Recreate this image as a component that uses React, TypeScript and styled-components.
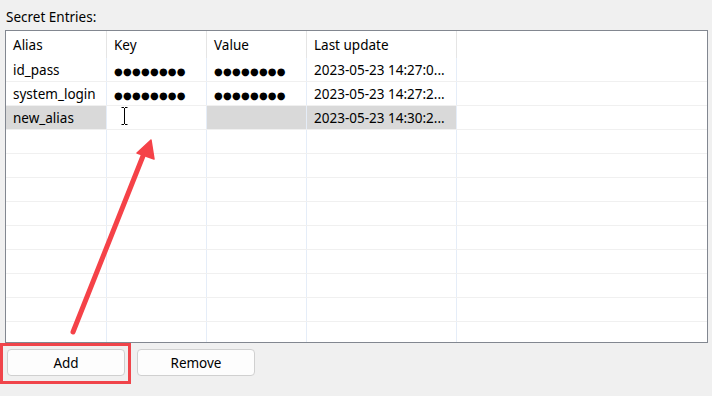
import React from 'react'
import styled, { createGlobalStyle } from 'styled-components'

const GlobalStyle = createGlobalStyle`
  html, body {
    margin: 0;
    padding: 0;
    background: #f0f0f0;
  }
  body {
    font-family: 'Noto Sans', 'Open Sans', sans-serif;
    font-size: 13.5px;
    color: #000;
  }
`

const COLS = [101, 100, 100, 150]

const Page = styled.div`
  position: relative;
  width: 712px;
  height: 396px;
  overflow: hidden;
`

const Label = styled.div`
  height: 30px;
  padding-left: 6px;
  line-height: 30px;
  box-sizing: border-box;
  padding-top: 2px;
`

const Frame = styled.div`
  margin-left: 5px;
  width: 703px;
  height: 313px;
  box-sizing: border-box;
  border: 1px solid #828790;
  background: #fff;
  overflow: hidden;
`

const HeaderRow = styled.div`
  display: flex;
  height: 27px;
`

const HeaderCell = styled.div<{ w: number }>`
  width: ${({ w }) => w}px;
  flex: none;
  box-sizing: border-box;
  padding-left: 7px;
  line-height: 28px;
  border-right: 1px solid #e5e5e5;
`

const Row = styled.div`
  display: flex;
  height: 24px;
  box-sizing: border-box;
  border-bottom: 1px solid #f0f0f0;
`

const Cell = styled.div<{ w: number; selected?: boolean }>`
  width: ${({ w }) => w}px;
  flex: none;
  box-sizing: border-box;
  padding-left: 7px;
  line-height: 24px;
  white-space: nowrap;
  overflow: hidden;
  border-right: 1px solid #e5edf8;
  background: ${({ selected }) => (selected ? '#d9d9d9' : '#fff')};
  position: relative;
`

const Dots = styled.span`
  font-family: 'DejaVu Sans', sans-serif;
  font-size: 10px;
  letter-spacing: 0.25px;
`

const Caret = styled.svg`
  position: absolute;
  left: 14px;
  top: 1px;
`

const Buttons = styled.div`
  display: flex;
  gap: 12px;
  padding: 6px 0 0 7px;
`

const Button = styled.button`
  width: 118px;
  height: 27px;
  box-sizing: border-box;
  border: 1px solid #d0d0d0;
  border-radius: 4px;
  background: #fdfdfd;
  font-family: inherit;
  font-size: 13.5px;
  color: #000;
  padding: 0;
`

const Highlight = styled.div`
  position: absolute;
  left: 0;
  top: 343px;
  width: 131px;
  height: 41px;
  box-sizing: border-box;
  border: 3px solid #f0444a;
`

const Overlay = styled.svg`
  position: absolute;
  left: 0;
  top: 0;
  pointer-events: none;
`

type Entry = { alias: string; key: boolean; value: boolean; updated: string }

const entries: Entry[] = [
  { alias: 'id_pass', key: true, value: true, updated: '2023-05-23 14:27:0...' },
  { alias: 'system_login', key: true, value: true, updated: '2023-05-23 14:27:2...' },
  { alias: 'new_alias', key: false, value: false, updated: '2023-05-23 14:30:2...' },
]

const SECRET = '●●●●●●●●'

export default function App() {
  const empty = Array.from({ length: 9 })
  return (
    <Page>
      <GlobalStyle />
      <Label>Secret Entries:</Label>
      <Frame>
        <HeaderRow>
          {['Alias', 'Key', 'Value', 'Last update'].map((h, i) => (
            <HeaderCell key={h} w={COLS[i]}>
              {h}
            </HeaderCell>
          ))}
        </HeaderRow>
        {entries.map((e, idx) => {
          const sel = idx === 2
          return (
            <Row key={e.alias}>
              <Cell w={COLS[0]} selected={sel}>
                {e.alias}
              </Cell>
              <Cell w={COLS[1]}>
                {e.key && <Dots>{SECRET}</Dots>}
                {sel && (
                  <Caret width="7" height="18" viewBox="0 0 7 18">
                    <path d="M0.5 0.5h2.5M4 0.5h2.5M3.5 1v16M0.5 17.5h2.5M4 17.5h2.5" stroke="#000" strokeWidth="1" fill="none" />
                  </Caret>
                )}
              </Cell>
              <Cell w={COLS[2]} selected={sel}>
                {e.value && <Dots>{SECRET}</Dots>}
              </Cell>
              <Cell w={COLS[3]} selected={sel}>
                {e.updated}
              </Cell>
            </Row>
          )
        })}
        {empty.map((_, i) => (
          <Row key={i}>
            {COLS.map((w, j) => (
              <Cell key={j} w={w} />
            ))}
          </Row>
        ))}
      </Frame>
      <Buttons>
        <Button>Add</Button>
        <Button>Remove</Button>
      </Buttons>
      <Highlight />
      <Overlay width="712" height="396" viewBox="0 0 712 396">
        <line x1="73" y1="332" x2="143" y2="156" stroke="#f54248" strokeWidth="5" strokeLinecap="round" />
        <polygon points="151,140 137,153 154,159" fill="#f54248" stroke="#f54248" strokeWidth="1.5" strokeLinejoin="round" />
      </Overlay>
    </Page>
  )
}
